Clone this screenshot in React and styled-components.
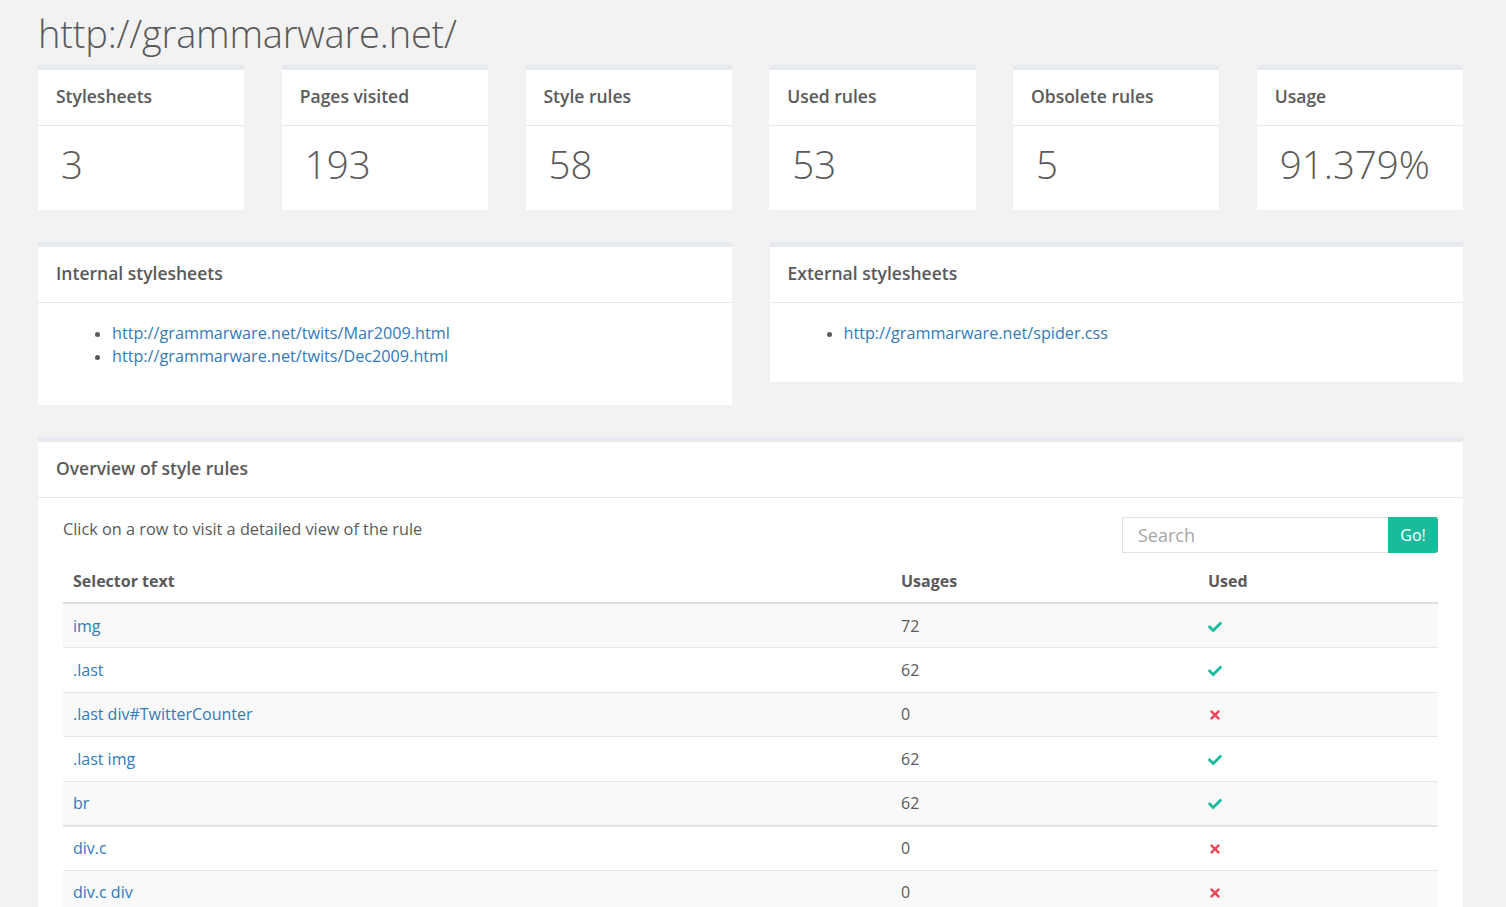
import styled, { createGlobalStyle } from "styled-components";
import { FaCheck, FaTimes } from "react-icons/fa";

const GlobalStyle = createGlobalStyle`
  html, body {
    margin: 0;
    padding: 0;
    background: #f2f2f2;
    font-family: "Open Sans", "Liberation Sans", sans-serif;
    color: #5a5a5a;
  }
  * {
    box-sizing: border-box;
  }
`;

const stats = [
  { label: "Stylesheets", value: "3" },
  { label: "Pages visited", value: "193" },
  { label: "Style rules", value: "58" },
  { label: "Used rules", value: "53" },
  { label: "Obsolete rules", value: "5" },
  { label: "Usage", value: "91.379%" },
];

const internalSheets = [
  "http://grammarware.net/twits/Mar2009.html",
  "http://grammarware.net/twits/Dec2009.html",
];

const externalSheets = ["http://grammarware.net/spider.css"];

const rules = [
  { selector: "img", usages: 72, used: true },
  { selector: ".last", usages: 62, used: true },
  { selector: ".last div#TwitterCounter", usages: 0, used: false },
  { selector: ".last img", usages: 62, used: true },
  { selector: "br", usages: 62, used: true },
  { selector: "div.c", usages: 0, used: false, group: true },
  { selector: "div.c div", usages: 0, used: false },
];

const App = () => {
  return (
    <Page>
      <GlobalStyle />
      <Title>http://grammarware.net/</Title>

      <StatGrid>
        {stats.map(({ label, value }) => (
          <Panel key={label}>
            <PanelHeader>{label}</PanelHeader>
            <StatValue>{value}</StatValue>
          </Panel>
        ))}
      </StatGrid>

      <SheetGrid>
        <Panel>
          <PanelHeader>Internal stylesheets</PanelHeader>
          <SheetList>
            {internalSheets.map((url) => (
              <li key={url}>
                <a href="#">{url}</a>
              </li>
            ))}
          </SheetList>
        </Panel>
        <Panel>
          <PanelHeader>External stylesheets</PanelHeader>
          <SheetList>
            {externalSheets.map((url) => (
              <li key={url}>
                <a href="#">{url}</a>
              </li>
            ))}
          </SheetList>
        </Panel>
      </SheetGrid>

      <Panel>
        <PanelHeader>Overview of style rules</PanelHeader>
        <OverviewBody>
          <Toolbar>
            <Hint>Click on a row to visit a detailed view of the rule</Hint>
            <SearchGroup>
              <SearchInput placeholder="Search" />
              <GoButton>Go!</GoButton>
            </SearchGroup>
          </Toolbar>
          <RuleTable>
            <thead>
              <tr>
                <th style={{ width: 828 }}>Selector text</th>
                <th style={{ width: 307 }}>Usages</th>
                <th>Used</th>
              </tr>
            </thead>
            <tbody>
              {rules.map((rule, i) => (
                <RuleRow key={rule.selector} $striped={i % 2 === 0} $group={rule.group}>
                  <td>
                    <a href="#">{rule.selector}</a>
                  </td>
                  <td>{rule.usages}</td>
                  <td>
                    {rule.used ? (
                      <FaCheck color="#1abb9c" size={14} />
                    ) : (
                      <FaTimes color="#e74c5c" size={14} />
                    )}
                  </td>
                </RuleRow>
              ))}
            </tbody>
          </RuleTable>
        </OverviewBody>
      </Panel>
    </Page>
  );
};

const Page = styled.div`
  padding: 11px 43px 0 38px;
  min-height: 907px;
  overflow: hidden;
`;

const Title = styled.h1`
  margin: 0 0 9px;
  font-size: 38px;
  line-height: 45px;
  font-weight: 300;
  color: #5a5a5a;
  letter-spacing: -0.2px;
`;

const Panel = styled.section`
  background: #fff;
  border-top: 5px solid #e6e9ed;
`;

const PanelHeader = styled.div`
  height: 56px;
  padding: 0 18px 3px;
  display: flex;
  align-items: center;
  border-bottom: 1px solid #e6e9ed;
  font-size: 17.5px;
  font-weight: 600;
  color: #5a5a5a;
`;

const StatGrid = styled.div`
  display: grid;
  grid-template-columns: repeat(6, 1fr);
  column-gap: 37.5px;
  margin-bottom: 32px;
`;

const StatValue = styled.div`
  height: 84px;
  padding: 0 0 8px 23px;
  display: flex;
  align-items: center;
  font-size: 38.5px;
  font-weight: 300;
  color: #5a5a5a;
`;

const SheetGrid = styled.div`
  display: grid;
  grid-template-columns: 1fr 1fr;
  column-gap: 38px;
  align-items: start;
  margin-bottom: 32px;
`;

const SheetList = styled.ul`
  margin: 0;
  padding: 19px 0 37px 74px;
  font-size: 16.2px;
  line-height: 23px;
  li {
    color: #5a5a5a;
  }
  li::marker {
    font-size: 15px;
  }
  a {
    color: #337ab7;
    text-decoration: none;
  }
`;

const OverviewBody = styled.div`
  padding: 19px 25px 0 25px;
`;

const Toolbar = styled.div`
  display: flex;
  justify-content: space-between;
  align-items: flex-start;
`;

const Hint = styled.p`
  margin: 0;
  font-size: 16.3px;
  line-height: 25px;
  color: #5a5a5a;
`;

const SearchGroup = styled.div`
  display: flex;
`;

const SearchInput = styled.input`
  width: 266px;
  height: 36px;
  border: 1px solid #e2e2e2;
  border-right: none;
  padding: 0 15px;
  font-family: inherit;
  font-size: 18px;
  color: #555;
  outline: none;
  &::placeholder {
    color: #a5a5a5;
  }
`;

const GoButton = styled.button`
  width: 50px;
  height: 36px;
  border: none;
  border-radius: 0 3px 3px 0;
  background: #1abb9c;
  color: #fff;
  font-family: inherit;
  font-size: 16px;
  padding: 0;
`;

const RuleTable = styled.table`
  width: 100%;
  border-collapse: collapse;
  margin-top: 10px;
  font-size: 16px;
  th {
    text-align: left;
    font-weight: 700;
    padding: 7px 10px 10px;
    line-height: 22px;
    color: #5a5a5a;
    border-bottom: 2px solid #dddddd;
  }
`;

const RuleRow = styled.tr`
  background: ${(p) => (p.$striped ? "#f9f9f9" : "#fff")};
  border-top: ${(p) => (p.$group ? "2px solid #e3e5e8" : "none")};
  td {
    height: 44.5px;
    padding: 0 10px;
    vertical-align: middle;
    border-bottom: 1px solid #e6e6e6;
    color: #5a5a5a;
  }
  td svg {
    display: block;
    margin: 2px 0 0 0;
  }
  a {
    color: #337ab7;
    text-decoration: none;
  }
`;

export default App;
